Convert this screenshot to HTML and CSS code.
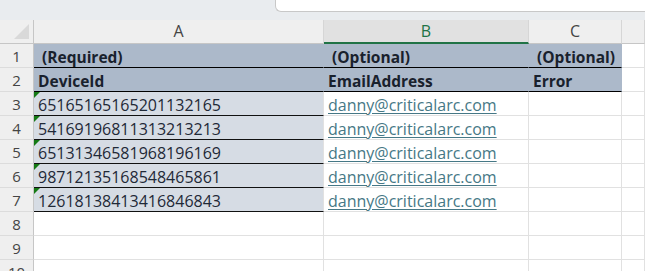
FILE: index.html
```html
<!DOCTYPE html>
<html lang="en">
<head>
    <meta charset="UTF-8">
    <meta name="viewport" content="width=device-width, initial-scale=1.0">
    <title>Devices</title>
    <link rel="stylesheet" href="styles.css">
</head>
<body>
    <div class="topbar">
        <div class="namebox"></div>
    </div>

    <div class="sheet">
        <div class="corner"><span class="corner-mark"></span></div>
        <div class="col-head">A</div>
        <div class="col-head active">B</div>
        <div class="col-head">C</div>
        <div class="col-head"></div>

        <div class="row-head">1</div>
        <div class="cell title note">(Required)</div>
        <div class="cell title note">(Optional)</div>
        <div class="cell title note">(Optional)</div>
        <div class="cell"></div>

        <div class="row-head">2</div>
        <div class="cell title">DeviceId</div>
        <div class="cell title">EmailAddress</div>
        <div class="cell title">Error</div>
        <div class="cell"></div>

        <div class="row-head">3</div>
        <div class="cell device">65165165165201132165</div>
        <div class="cell"><a href="#">danny@criticalarc.com</a></div>
        <div class="cell"></div>
        <div class="cell"></div>

        <div class="row-head">4</div>
        <div class="cell device">54169196811313213213</div>
        <div class="cell"><a href="#">danny@criticalarc.com</a></div>
        <div class="cell"></div>
        <div class="cell"></div>

        <div class="row-head">5</div>
        <div class="cell device">65131346581968196169</div>
        <div class="cell"><a href="#">danny@criticalarc.com</a></div>
        <div class="cell"></div>
        <div class="cell"></div>

        <div class="row-head">6</div>
        <div class="cell device">98712135168548465861</div>
        <div class="cell"><a href="#">danny@criticalarc.com</a></div>
        <div class="cell"></div>
        <div class="cell"></div>

        <div class="row-head">7</div>
        <div class="cell device">12618138413416846843</div>
        <div class="cell"><a href="#">danny@criticalarc.com</a></div>
        <div class="cell"></div>
        <div class="cell"></div>

        <div class="row-head">8</div>
        <div class="cell"></div>
        <div class="cell"></div>
        <div class="cell"></div>
        <div class="cell"></div>

        <div class="row-head">9</div>
        <div class="cell"></div>
        <div class="cell"></div>
        <div class="cell"></div>
        <div class="cell"></div>

        <div class="row-head">10</div>
        <div class="cell"></div>
        <div class="cell"></div>
        <div class="cell"></div>
        <div class="cell"></div>
    </div>
</body>
</html>
```

FILE: styles.css
```css
body {
    margin: 0;
    background-color: #ffffff;
    font-family: "Open Sans", "Liberation Sans", sans-serif;
    overflow: hidden;
}

.topbar {
    height: 21px;
    background-color: #e9ecef;
    box-sizing: border-box;
    padding-left: 275px;
}

.namebox {
    height: 13px;
    margin-top: -1px;
    background-color: #ffffff;
    border-left: 1px solid #c8c8c8;
    border-bottom: 1px solid #c8c8c8;
    border-bottom-left-radius: 6px;
    box-sizing: border-box;
}

.sheet {
    display: grid;
    grid-template-columns: 34px 290px 205px 93px 1fr;
    grid-auto-rows: 24px;
}

.corner,
.col-head,
.row-head,
.cell {
    box-sizing: border-box;
    white-space: nowrap;
    overflow: hidden;
}

.corner {
    background-color: #efefef;
    border-right: 1px solid #c6c6c6;
    border-bottom: 1px solid #c6c6c6;
    display: flex;
    align-items: flex-end;
    justify-content: flex-end;
    padding: 0 4px 4px 0;
}

.corner-mark {
    width: 0;
    height: 0;
    border-style: solid;
    border-width: 0 0 15px 15px;
    border-color: transparent transparent #d9d9d9 transparent;
}

.col-head {
    background-color: #efefef;
    border-right: 1px solid #d6d6d6;
    border-bottom: 1px solid #c6c6c6;
    color: #444444;
    font-size: 16px;
    text-align: center;
    line-height: 23px;
}

.col-head.active {
    background-color: #e1e1e1;
    border-bottom: 2px solid #217346;
    color: #217346;
}

.row-head {
    background-color: #efefef;
    border-right: 1px solid #c6c6c6;
    border-bottom: 1px solid #dcdcdc;
    color: #444444;
    font-size: 15px;
    text-align: center;
    line-height: 25px;
}

.cell {
    position: relative;
    border-right: 1px solid #e1e1e1;
    border-bottom: 1px solid #e1e1e1;
    padding: 2px 4px 0;
    font-size: 16px;
    color: #222a35;
    display: flex;
    align-items: center;
}

.cell.title {
    background-color: #acb9ca;
    border-right-color: #acb9ca;
    border-bottom: 1px solid #000000;
    font-size: 15.5px;
    font-weight: bold;
    color: #19212d;
}

.cell.note {
    padding-left: 8px;
}

.cell.device {
    background-color: #d6dce4;
    border-bottom: 1px solid #111111;
    color: #1f2937;
}

.cell.device::before {
    content: "";
    position: absolute;
    left: 0;
    top: 0;
    border-style: solid;
    border-width: 6px 6px 0 0;
    border-color: #157a15 transparent transparent transparent;
}

.cell a {
    color: #467886;
    text-decoration: underline;
    text-underline-offset: 2px;
}
```
